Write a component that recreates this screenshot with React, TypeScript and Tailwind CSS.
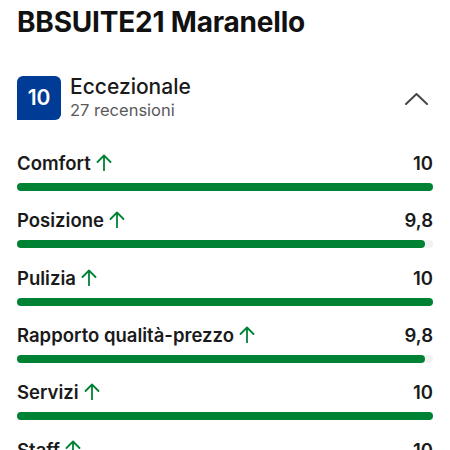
interface Score {
    label: string;
    value: string;
    pct: number;
}

const scores: Score[] = [
    { label: "Comfort", value: "10", pct: 100 },
    { label: "Posizione", value: "9,8", pct: 98 },
    { label: "Pulizia", value: "10", pct: 100 },
    { label: "Rapporto qualità-prezzo", value: "9,8", pct: 98 },
    { label: "Servizi", value: "10", pct: 100 },
    { label: "Staff", value: "10", pct: 100 },
];

function UpArrow() {
    return (
        <svg width="16" height="17" viewBox="0 0 16 17" fill="none" stroke="#008234" strokeWidth="1.8" strokeLinecap="round" strokeLinejoin="round" className="ml-[5px] mb-[3px]">
            <path d="M8 1.5V16.5M1.5 8L8 1.5L14.5 8" />
        </svg>
    );
}

function Chevron() {
    return (
        <svg width="23" height="12" viewBox="0 0 23 12" fill="none" stroke="#474747" strokeWidth="2" strokeLinecap="round" strokeLinejoin="round" className="ml-auto mr-[5px] mt-[2px]">
            <path d="M1 11L11.5 1L22 11" />
        </svg>
    );
}

export default function App() {
    return (
        <div className="h-[450px] w-[450px] overflow-hidden bg-white px-[17px] font-['Inter',sans-serif] text-[#1a1a1a]">
            <h1 className="pt-[5px] text-[28px] font-bold leading-[34px] tracking-[-0.2px] text-[#111]">
                BBSUITE21 Maranello
            </h1>

            {/* review summary */}
            <div className="mt-[36px] flex items-center">
                <div className="flex h-[44px] w-[44px] items-center justify-center rounded-t-[6px] rounded-br-[6px] bg-[#003b95] text-[21px] font-semibold text-white">
                    10
                </div>
                <div className="ml-[9px] flex flex-col">
                    <span className="text-[21px] font-medium leading-[24px] text-[#1a1a1a]">Eccezionale</span>
                    <span className="text-[16.5px] leading-[22px] text-[#595959]">27 recensioni</span>
                </div>
                <Chevron />
            </div>

            {/* category scores */}
            <div className="mt-[31px] flex flex-col">
                {scores.map((s) => (
                    <div key={s.label} className="h-[57.3px]">
                        <div className="flex h-[24px] items-center justify-between">
                            <div className="flex items-center">
                                <span className="text-[18.5px] font-semibold text-[#1a1a1a]">{s.label}</span>
                                <UpArrow />
                            </div>
                            <span className="text-[18.5px] font-semibold text-[#1a1a1a]">{s.value}</span>
                        </div>
                        <div className="mt-[7px] h-[8px] w-full rounded-full bg-[#f2f2f2]">
                            <div className="h-full rounded-full bg-[#008234]" style={{ width: `${s.pct}%` }} />
                        </div>
                    </div>
                ))}
            </div>
        </div>
    );
}
